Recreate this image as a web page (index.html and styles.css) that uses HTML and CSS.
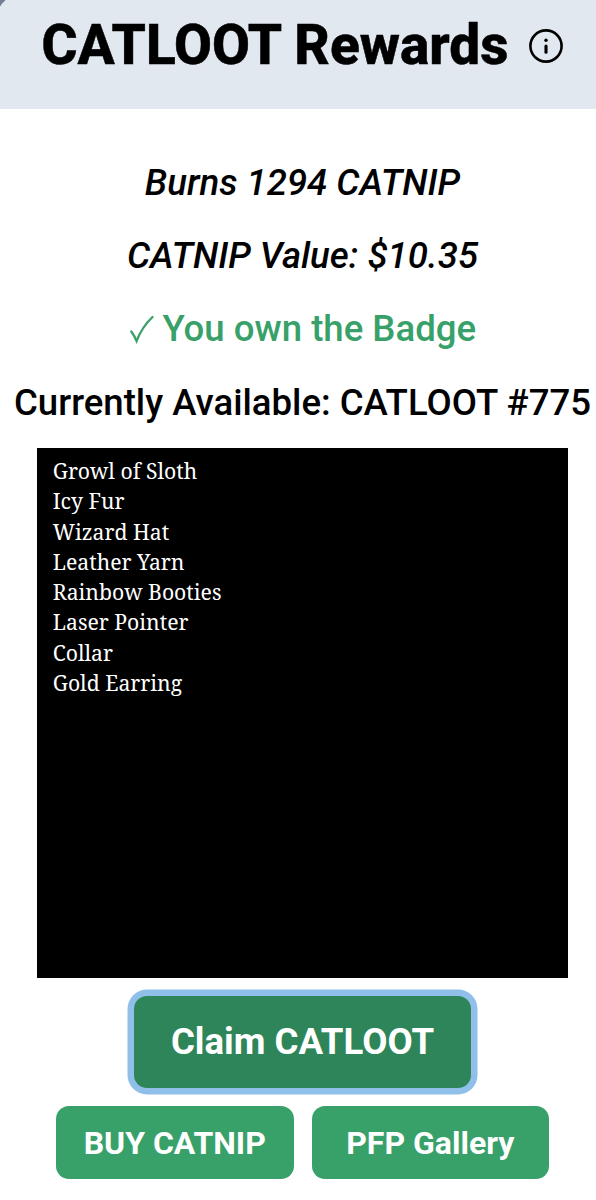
FILE: index.html
```html
<!DOCTYPE html>
<html lang="en">
<head>
    <meta charset="UTF-8">
    <meta name="viewport" content="width=device-width, initial-scale=1.0">
    <title>CATLOOT Rewards</title>
    <link rel="stylesheet" href="styles.css">
</head>
<body>
    <div class="card">
        <header class="header">
            <h1 class="title">CATLOOT Rewards</h1>
            <svg class="info-icon" viewBox="0 0 36 36" fill="none" stroke="#000" stroke-width="2.6" stroke-linecap="round">
                <circle cx="18" cy="18" r="15.6"/>
                <path d="M18 18v6.2" stroke-width="3.1"/>
                <circle cx="18" cy="12.2" r="1.7" fill="#000" stroke="none"/>
            </svg>
        </header>

        <main class="content">
            <p class="line burns">Burns 1294 CATNIP</p>
            <p class="line value">CATNIP Value: $10.35</p>
            <p class="line badge">
                <svg class="check" viewBox="0 0 26 30" fill="none" stroke="currentColor" stroke-linecap="round">
                    <path d="M2.3 17.5Q5 21 7.6 27Q13 13 23.5 3"/>
                </svg>
                <span class="badge-text">You own the Badge</span>
            </p>
            <p class="line available">Currently Available: CATLOOT #775</p>

            <!-- Loot card -->
            <ul class="loot">
                <li>Growl of Sloth</li>
                <li>Icy Fur</li>
                <li>Wizard Hat</li>
                <li>Leather Yarn</li>
                <li>Rainbow Booties</li>
                <li>Laser Pointer</li>
                <li>Collar</li>
                <li>Gold Earring</li>
            </ul>

            <button class="btn claim">Claim CATLOOT</button>
            <div class="actions">
                <button class="btn small">BUY CATNIP</button>
                <button class="btn small">PFP Gallery</button>
            </div>
        </main>
    </div>
</body>
</html>
```
FILE: styles.css
```css
body {
    margin: 0;
    background-color: #718096;
    color: #000;
    font-family: Roboto, sans-serif;
}

.card {
    height: 1200px;
    overflow: hidden;
    background-color: #fff;
    clip-path: polygon(6px 0, 100% 0, 100% 100%, 0 100%, 0 7px, 2px 4px);
}

.header {
    display: flex;
    align-items: center;
    box-sizing: border-box;
    height: 109px;
    padding: 0 0 17px 41.5px;
    background-color: #e2e8f0;
}

.title {
    margin: -3px 0 0;
    width: 486px;
    font-size: 55px;
    font-weight: 800;
    line-height: 60px;
    white-space: nowrap;
    -webkit-text-stroke: 0.5px #000;
}

.info-icon {
    flex: none;
    width: 36px;
    height: 36px;
}

.content {
    display: flex;
    flex-direction: column;
    align-items: center;
    padding: 37px 0 0 9px;
}

.line {
    margin: 0;
    height: 73.2px;
    font-size: 36.6px;
    font-weight: 500;
    line-height: 73.2px;
    white-space: nowrap;
}

.burns,
.value {
    font-style: italic;
}

.badge {
    display: flex;
    align-items: center;
    color: #38a169;
}

.check {
    width: 26px;
    height: 30px;
    margin-right: 7.5px;
    stroke-width: 2.3;
}

.loot {
    box-sizing: border-box;
    width: 530.5px;
    height: 530px;
    margin: 9.5px 0 0;
    padding: 7.7px 15.5px;
    background-color: #000;
    color: #fff;
    font-family: "Noto Serif", "DejaVu Serif", serif;
    font-size: 21.2px;
    line-height: 30.3px;
    list-style: none;
}

.btn {
    border: none;
    border-radius: 13px;
    background-color: #38a169;
    color: #fff;
    font-family: inherit;
    font-weight: 700;
    white-space: nowrap;
}

.claim {
    width: 337px;
    height: 92px;
    margin-top: 18px;
    padding-bottom: 3px;
    background-color: #2f855a;
    box-shadow: 0 0 0 6.5px #90c0ea;
    font-size: 36.6px;
}

.actions {
    display: flex;
    gap: 18px;
    margin-top: 18px;
}

.small {
    width: 237.5px;
    height: 73px;
    font-size: 32px;
}
```
